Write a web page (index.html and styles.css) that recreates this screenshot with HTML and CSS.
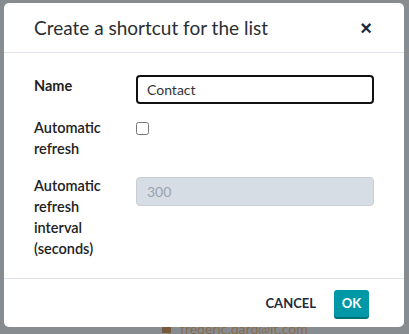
FILE: index.html
```html
<!DOCTYPE html>
<html lang="en">
<head>
    <meta charset="UTF-8">
    <meta name="viewport" content="width=device-width,initial-scale=1">
    <title>Shortcut</title>
    <link rel="stylesheet" href="styles.css">
</head>
<body>
<main class="page">
    <p class="contact-line"><span class="mail-icon"></span>frederic.dard@it.com</p>
</main>
<div class="modal">
    <header class="modal-header">
        <h2>Create a shortcut for the list</h2>
        <button class="close" type="button">&times;</button>
    </header>
    <form class="modal-body">
        <div class="form-row">
            <label for="name" class="strong">Name</label>
            <input id="name" class="text-input focused" type="text" value="Contact">
        </div>
        <div class="form-row row-check">
            <label for="auto">Automatic<br>refresh</label>
            <input id="auto" class="check" type="checkbox">
        </div>
        <div class="form-row row-interval">
            <label for="interval">Automatic<br>refresh<br>interval<br>(seconds)</label>
            <input id="interval" class="text-input" type="text" placeholder="300" disabled>
        </div>
    </form>
    <footer class="modal-footer">
        <button class="btn-link" type="button">CANCEL</button>
        <button class="btn-ok" type="button">OK</button>
    </footer>
</div>
</body>
</html>
```

FILE: styles.css
```css
* {
    margin: 0;
    padding: 0;
    box-sizing: border-box;
}

body {
    background: #878c91;
    font-family: Lato, "Open Sans", sans-serif;
    color: #222;
    height: 334px;
    overflow: hidden;
}

.page {
    padding-top: 320px;
    padding-left: 162px;
}

.contact-line {
    display: flex;
    align-items: center;
    gap: 9px;
    font-size: 14px;
    color: #8a6d4f;
}

.mail-icon {
    width: 9px;
    height: 8px;
    background: #7a5a3c;
}

.modal {
    position: absolute;
    top: 3px;
    left: 4px;
    width: 400px;
    height: 324px;
    background: #fff;
    border-radius: 5px;
    display: flex;
    flex-direction: column;
}

.modal-header {
    height: 50px;
    flex: none;
    display: flex;
    align-items: center;
    justify-content: space-between;
    padding: 0 32px 0 30px;
    border-bottom: 1px solid #dfe3ea;
}

.modal-header h2 {
    font-size: 19px;
    font-weight: 400;
    color: #2a2e33;
}

.close {
    border: 0;
    background: none;
    font-size: 20px;
    font-weight: 700;
    color: #1c2a3a;
    font-family: Arial, sans-serif;
    line-height: 1;
}

.modal-body {
    height: 225px;
    flex: none;
    padding: 22px 29px 0 30px;
}

.form-row {
    display: flex;
    align-items: flex-start;
}

.form-row label {
    width: 102px;
    font-size: 14.5px;
    font-weight: 600;
    line-height: 20.7px;
    color: #222;
}

.form-row label.strong {
    font-weight: 700;
    padding-top: 1px;
}

.row-check {
    margin-top: 14px;
}

.row-interval {
    margin-top: 17px;
}

.text-input {
    width: 238px;
    height: 29px;
    border: 1px solid #c9cfd6;
    border-radius: 4px;
    padding: 0 10px;
    font-family: inherit;
    font-size: 14px;
    color: #333;
}

.text-input.focused {
    border: 2px solid #111;
    padding: 0 9px;
    outline: none;
}

.text-input:disabled {
    background: #d6dde4;
    margin-top: 1px;
}

.text-input::placeholder {
    color: #9aa3ad;
}

.check {
    width: 13px;
    height: 13px;
    margin-top: 4px;
}

.modal-footer {
    flex: 1;
    border-top: 1px solid #dfe3ea;
    display: flex;
    align-items: center;
    justify-content: flex-end;
    gap: 18px;
    padding-right: 35px;
}

.btn-link {
    border: 0;
    background: none;
    font-family: inherit;
    font-size: 13px;
    font-weight: 700;
    color: #1d2b3b;
}

.btn-ok {
    border: 0;
    background: #0097a7;
    color: #fff;
    font-family: inherit;
    font-size: 13px;
    font-weight: 700;
    width: 35px;
    height: 27px;
    border-radius: 3px;
    box-shadow: 0 2px 0 #00707c;
}
```
